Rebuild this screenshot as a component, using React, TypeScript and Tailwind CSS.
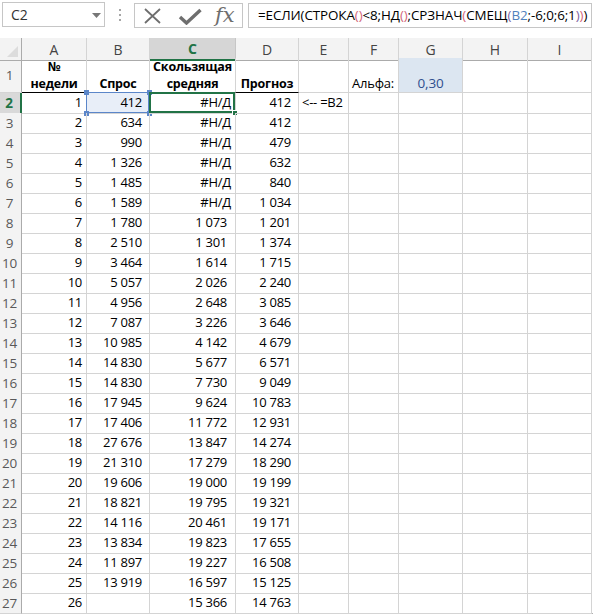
import React from "react";

const COLS = "grid grid-cols-[22px_65px_63px_86px_63px_50px_50px_64px_65px_64px]";
const FONT = "font-['Open_Sans','Noto_Sans',sans-serif]";

type Row = [number, string, string, string];
const data: Row[] = [
  [1, "412", "#Н/Д", "412"],
  [2, "634", "#Н/Д", "412"],
  [3, "990", "#Н/Д", "479"],
  [4, "1 326", "#Н/Д", "632"],
  [5, "1 485", "#Н/Д", "840"],
  [6, "1 589", "#Н/Д", "1 034"],
  [7, "1 780", "1 073", "1 201"],
  [8, "2 510", "1 301", "1 374"],
  [9, "3 464", "1 614", "1 715"],
  [10, "5 057", "2 026", "2 240"],
  [11, "4 956", "2 648", "3 085"],
  [12, "7 087", "3 226", "3 646"],
  [13, "10 985", "4 142", "4 679"],
  [14, "14 830", "5 677", "6 571"],
  [15, "14 830", "7 730", "9 049"],
  [16, "17 945", "9 624", "10 783"],
  [17, "17 406", "11 772", "12 931"],
  [18, "27 676", "13 847", "14 274"],
  [19, "21 310", "17 279", "18 290"],
  [20, "19 606", "19 000", "19 199"],
  [21, "18 821", "19 795", "19 321"],
  [22, "14 116", "20 461", "19 171"],
  [23, "13 834", "19 823", "17 655"],
  [24, "11 897", "19 227", "16 508"],
  [25, "13 919", "16 597", "15 125"],
  [26, "", "15 366", "14 763"],
];

function Cell({
  children,
  className = "",
}: {
  children?: React.ReactNode;
  className?: string;
}) {
  return (
    <div
      className={`relative h-full border-r border-b border-[#d4d4d4] flex items-center whitespace-nowrap overflow-visible ${className}`}
    >
      {children}
    </div>
  );
}

function RowHeader({ n, active }: { n: number; active?: boolean }) {
  return (
    <div
      className={`h-full flex items-center justify-center pr-[2px] text-[13.5px] ${
        active
          ? "bg-[#d9d9d9] text-[#217346] font-bold border-r-2 border-r-[#217346] border-b border-b-[#c6c6c6]"
          : "bg-[#f3f3f3] text-[#595959] border-r border-r-[#ababab] border-b border-b-[#d4d4d4]"
      }`}
    >
      {n}
    </div>
  );
}

function ColHeader({ l, active }: { l: string; active?: boolean }) {
  return (
    <div
      className={`h-full flex items-center justify-center text-[14px] ${
        active
          ? "bg-[#d6d6d6] text-[#217346] font-bold border-b-2 border-b-[#217346] border-r border-r-[#c6c6c6]"
          : "bg-[#f3f3f3] text-[#444] border-b border-b-[#ababab] border-r border-r-[#d4d4d4]"
      }`}
    >
      {l}
    </div>
  );
}

function Formula() {
  const pink = "text-[#d2667a]";
  const purple = "text-[#8064a2]";
  const blue = "text-[#4f81bd]";
  return (
    <span className="text-[13.4px] text-black tracking-[-0.1px]">
      =ЕСЛИ(СТРОКА<span className={pink}>()</span>&lt;8;НД<span className={pink}>()</span>;СРЗНАЧ
      <span className={pink}>(</span>СМЕЩ<span className={purple}>(</span>
      <span className={blue}>B2</span>;-6;0;6;1<span className={purple}>)</span>
      <span className={pink}>)</span>)
    </span>
  );
}

function TopBar() {
  return (
    <div className="h-[38px] flex items-start pt-[2px] bg-white">
      <div className="ml-[2px] w-[103px] h-[25px] border border-[#c6c6c6] flex items-center pl-[8px] relative text-[14px] text-[#333]">
        C2
        <svg className="absolute left-[89px] top-[10px]" width="9" height="5" viewBox="0 0 9 5">
          <path d="M0 0 L9 0 L4.5 5 Z" fill="#777" />
        </svg>
      </div>
      <div className="w-[29px] h-[25px] flex flex-col items-center justify-center gap-[3px]">
        <div className="w-[2px] h-[2px] bg-[#a6a6a6]" />
        <div className="w-[2px] h-[2px] bg-[#a6a6a6]" />
        <div className="w-[2px] h-[2px] bg-[#a6a6a6]" />
      </div>
      <div className="w-[109px] h-[25px] mt-[1px] border border-[#c6c6c6] flex items-center relative">
        <svg className="absolute left-[9px] top-[4px]" width="17" height="16" viewBox="0 0 17 16">
          <path d="M1 1 L16 15 M16 1 L1 15" stroke="#6e6e6e" strokeWidth="1.8" fill="none" />
        </svg>
        <svg className="absolute left-[43px] top-[4px]" width="24" height="17" viewBox="0 0 24 17">
          <path d="M2 9 L8.5 15 L22.5 2" stroke="#6e6e6e" strokeWidth="3.4" fill="none" strokeLinejoin="miter" />
        </svg>
        <span className="absolute left-[80px] top-[-4px] font-['DejaVu_Serif','Liberation_Serif',serif] italic text-[21px] text-[#6e6e6e]">
          fx
        </span>
      </div>
      <div className="ml-[5px] flex-1 mr-[1px] h-[25px] mt-[1px] border border-[#c6c6c6] flex items-center pl-[9px] overflow-hidden">
        <Formula />
      </div>
    </div>
  );
}

const hdr =
  "h-full border-r border-r-[#d4d4d4] border-b border-b-black flex flex-col items-center justify-end font-bold leading-[17px] text-[12.5px] tracking-[-0.2px]";

export default function App() {
  return (
    <div className={`w-[593px] h-[614px] bg-white overflow-hidden ${FONT} text-black`}>
      <TopBar />
      {/* column headers */}
      <div className={`${COLS} h-[20px]`}>
        <div className="h-full bg-[#f3f3f3] border-r border-r-[#ababab] border-b border-b-[#ababab] relative">
          <svg className="absolute right-[3px] bottom-[3px]" width="11" height="11" viewBox="0 0 11 11">
            <path d="M11 0 L11 11 L0 11 Z" fill="#dcdcdc" />
          </svg>
        </div>
        {["A", "B", "C", "D", "E", "F", "G", "H", "I"].map((l) => (
          <ColHeader key={l} l={l} active={l === "C"} />
        ))}
      </div>
      {/* row 1 */}
      <div className={`${COLS} h-[35px] text-[13px] tracking-[-0.2px]`}>
        <RowHeader n={1} />
        <div className={hdr}>
          <span>№</span>
          <span>недели</span>
        </div>
        <div className={hdr}>
          <span>Спрос</span>
        </div>
        <div className={hdr}>
          <span>Скользящая</span>
          <span>средняя</span>
        </div>
        <div className={hdr}>
          <span>Прогноз</span>
        </div>
        <Cell />
        <div className="h-full border-r border-b border-[#d4d4d4] flex flex-col justify-end pb-[1px] pl-[3px] leading-[16px] whitespace-nowrap">
          Альфа:
        </div>
        <div className="h-full border-r border-b border-[#d4d4d4] bg-[#dce6f1] flex flex-col items-center justify-end pb-[1px] leading-[16px] text-[#2f4f8f] text-[13.5px]">
          0,30
        </div>
        <Cell />
        <Cell />
      </div>
      {/* data rows */}
      {data.map(([a, b, c, d], i) => {
        const rowNum = i + 2;
        const first = i === 0;
        return (
          <div key={rowNum} className={`${COLS} h-[20px] text-[13px] tracking-[-0.25px]`}>
            <RowHeader n={rowNum} active={first} />
            <Cell className="justify-end pr-[4px]">{a}</Cell>
            <Cell className={`justify-end pr-[7px] ${first ? "bg-[#e8eef8]" : ""}`}>
              {b}
              {first && (
                <>
                  <div className="absolute left-[-1px] top-[-1px] right-0 bottom-0 border border-[#5b86c9] pointer-events-none" />
                  <div className="absolute left-[-3px] top-[-3px] w-[5px] h-[5px] bg-[#5b86c9]" />
                  <div className="absolute right-[-3px] top-[-3px] w-[5px] h-[5px] bg-[#5b86c9]" />
                  <div className="absolute left-[-3px] bottom-[-3px] w-[5px] h-[5px] bg-[#5b86c9]" />
                  <div className="absolute right-[-3px] bottom-[-3px] w-[5px] h-[5px] bg-[#5b86c9]" />
                </>
              )}
            </Cell>
            <Cell className={`justify-end ${c.startsWith("#") ? "pr-[4px]" : "pr-[8px]"}`}>
              {c}
              {first && (
                <>
                  <div className="absolute left-[-1px] top-[-1px] right-0 bottom-0 border-2 border-[#217346] pointer-events-none" />
                  <div className="absolute right-[-3px] bottom-[-3px] w-[6px] h-[6px] bg-[#217346] border border-white" />
                </>
              )}
            </Cell>
            <Cell className="justify-end pr-[7px]">{d}</Cell>
            <Cell className="pl-[3px]">{first ? "<-- =B2" : ""}</Cell>
            <Cell />
            <Cell />
            <Cell />
            <Cell />
          </div>
        );
      })}
      <div className="h-[1px] bg-[#b0b0b0]" />
    </div>
  );
}
